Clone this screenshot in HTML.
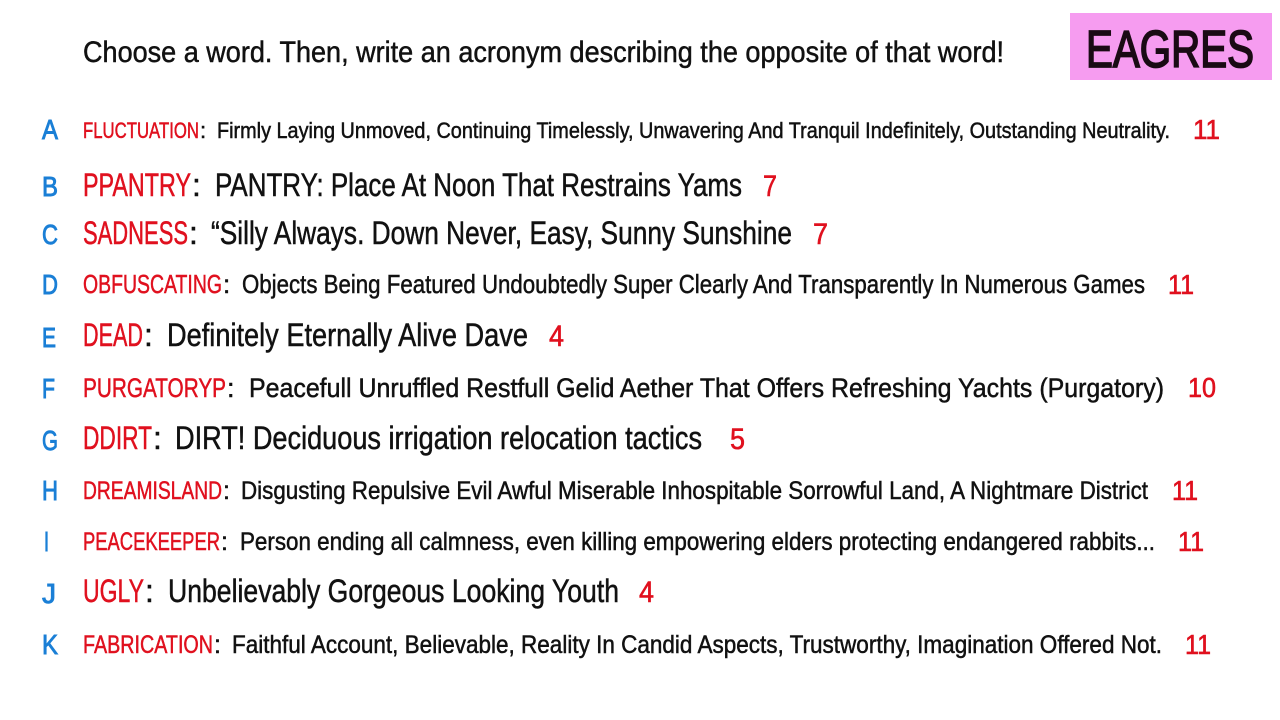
<!DOCTYPE html>
<html><head><meta charset="utf-8"><style>
html,body{margin:0;padding:0;background:#fff;width:1280px;height:720px;overflow:hidden}
svg text{font-family:"Liberation Sans Narrow","Liberation Sans",sans-serif}
.l{fill:#1a7fd6;stroke:#1a7fd6;stroke-width:0.9}
.w{fill:#e0101e;stroke:#e0101e;stroke-width:0.5}
.d{fill:#111;stroke:#111;stroke-width:0.5}
.n{fill:#e0101e;stroke:#e0101e;stroke-width:0.6}
</style></head><body>
<svg width="1280" height="720" xmlns="http://www.w3.org/2000/svg">
<rect x="1070" y="13" width="202" height="67" fill="#f69cf0"/>
<text x="1086" y="67" font-size="52" fill="#1a0a14" stroke="#1a0a14" stroke-width="1.8" textLength="168" lengthAdjust="spacingAndGlyphs">EAGRES</text>
<text class="d" x="83" y="62" font-size="30" textLength="921" lengthAdjust="spacingAndGlyphs">Choose a word. Then, write an acronym describing the opposite of that word!</text>

<g font-size="28">
<text class="l" x="42" y="139" textLength="16" lengthAdjust="spacingAndGlyphs">A</text>
<text class="l" x="42" y="196" textLength="16" lengthAdjust="spacingAndGlyphs">B</text>
<text class="l" x="42" y="244" textLength="16" lengthAdjust="spacingAndGlyphs">C</text>
<text class="l" x="42" y="294" textLength="16" lengthAdjust="spacingAndGlyphs">D</text>
<text class="l" x="42" y="347" textLength="14" lengthAdjust="spacingAndGlyphs">E</text>
<text class="l" x="42" y="398" textLength="13" lengthAdjust="spacingAndGlyphs">F</text>
<text class="l" x="42" y="450" textLength="16" lengthAdjust="spacingAndGlyphs">G</text>
<text class="l" x="42" y="500" textLength="16" lengthAdjust="spacingAndGlyphs">H</text>
<text class="l" x="44" y="551" textLength="5" lengthAdjust="spacingAndGlyphs">I</text>
<text class="l" x="42" y="603" textLength="14" lengthAdjust="spacingAndGlyphs">J</text>
<text class="l" x="42" y="654" textLength="16" lengthAdjust="spacingAndGlyphs">K</text>
</g>

<text class="w" x="83" y="138" font-size="22" textLength="116" lengthAdjust="spacingAndGlyphs">FLUCTUATION</text>
<text class="d" x="200" y="138" font-size="22">:</text>
<text class="d" x="217" y="138" font-size="22" textLength="953" lengthAdjust="spacingAndGlyphs">Firmly Laying Unmoved, Continuing Timelessly, Unwavering And Tranquil Indefinitely, Outstanding Neutrality.</text>
<text class="n" x="1193" y="139" font-size="28" textLength="27" lengthAdjust="spacingAndGlyphs">11</text>

<text class="w" x="83" y="196" font-size="32" textLength="108" lengthAdjust="spacingAndGlyphs">PPANTRY</text>
<text class="d" x="192" y="196" font-size="32">:</text>
<text class="d" x="215" y="196" font-size="32" textLength="527" lengthAdjust="spacingAndGlyphs">PANTRY: Place At Noon That Restrains Yams</text>
<text class="n" x="763" y="196" font-size="30" textLength="14" lengthAdjust="spacingAndGlyphs">7</text>

<text class="w" x="83" y="244" font-size="32" textLength="105" lengthAdjust="spacingAndGlyphs">SADNESS</text>
<text class="d" x="189" y="244" font-size="32">:</text>
<text class="d" x="211" y="244" font-size="32" textLength="581" lengthAdjust="spacingAndGlyphs">“Silly Always. Down Never, Easy, Sunny Sunshine</text>
<text class="n" x="813" y="244" font-size="30" textLength="15" lengthAdjust="spacingAndGlyphs">7</text>

<text class="w" x="83" y="293" font-size="26" textLength="139" lengthAdjust="spacingAndGlyphs">OBFUSCATING</text>
<text class="d" x="223" y="293" font-size="26">:</text>
<text class="d" x="242" y="293" font-size="26" textLength="903" lengthAdjust="spacingAndGlyphs">Objects Being Featured Undoubtedly Super Clearly And Transparently In Numerous Games</text>
<text class="n" x="1168" y="294" font-size="28" textLength="26" lengthAdjust="spacingAndGlyphs">11</text>

<text class="w" x="83" y="346" font-size="32" textLength="60" lengthAdjust="spacingAndGlyphs">DEAD</text>
<text class="d" x="144" y="346" font-size="32">:</text>
<text class="d" x="167" y="346" font-size="32" textLength="361" lengthAdjust="spacingAndGlyphs">Definitely Eternally Alive Dave</text>
<text class="n" x="549" y="346" font-size="30" textLength="15" lengthAdjust="spacingAndGlyphs">4</text>

<text class="w" x="83" y="397" font-size="27" textLength="143" lengthAdjust="spacingAndGlyphs">PURGATORYP</text>
<text class="d" x="227" y="397" font-size="27">:</text>
<text class="d" x="249" y="397" font-size="27" textLength="915" lengthAdjust="spacingAndGlyphs">Peacefull Unruffled Restfull Gelid Aether That Offers Refreshing Yachts (Purgatory)</text>
<text class="n" x="1188" y="397" font-size="28" textLength="28" lengthAdjust="spacingAndGlyphs">10</text>

<text class="w" x="83" y="449" font-size="32" textLength="69" lengthAdjust="spacingAndGlyphs">DDIRT</text>
<text class="d" x="153" y="449" font-size="32">:</text>
<text class="d" x="175" y="449" font-size="32" textLength="527" lengthAdjust="spacingAndGlyphs">DIRT! Deciduous irrigation relocation tactics</text>
<text class="n" x="730" y="449" font-size="30" textLength="15" lengthAdjust="spacingAndGlyphs">5</text>

<text class="w" x="83" y="499" font-size="25" textLength="139" lengthAdjust="spacingAndGlyphs">DREAMISLAND</text>
<text class="d" x="223" y="499" font-size="25">:</text>
<text class="d" x="241" y="499" font-size="25" textLength="907" lengthAdjust="spacingAndGlyphs">Disgusting Repulsive Evil Awful Miserable Inhospitable Sorrowful Land, A Nightmare District</text>
<text class="n" x="1172" y="500" font-size="28" textLength="26" lengthAdjust="spacingAndGlyphs">11</text>

<text class="w" x="83" y="550" font-size="25" textLength="137" lengthAdjust="spacingAndGlyphs">PEACEKEEPER</text>
<text class="d" x="221" y="550" font-size="25">:</text>
<text class="d" x="240" y="550" font-size="25" textLength="915" lengthAdjust="spacingAndGlyphs">Person ending all calmness, even killing empowering elders protecting endangered rabbits...</text>
<text class="n" x="1178" y="551" font-size="28" textLength="26" lengthAdjust="spacingAndGlyphs">11</text>

<text class="w" x="83" y="602" font-size="32" textLength="61" lengthAdjust="spacingAndGlyphs">UGLY</text>
<text class="d" x="145" y="602" font-size="32">:</text>
<text class="d" x="168" y="602" font-size="32" textLength="451" lengthAdjust="spacingAndGlyphs">Unbelievably Gorgeous Looking Youth</text>
<text class="n" x="639" y="602" font-size="30" textLength="15" lengthAdjust="spacingAndGlyphs">4</text>

<text class="w" x="83" y="653" font-size="25" textLength="130" lengthAdjust="spacingAndGlyphs">FABRICATION</text>
<text class="d" x="214" y="653" font-size="25">:</text>
<text class="d" x="232" y="653" font-size="25" textLength="930" lengthAdjust="spacingAndGlyphs">Faithful Account, Believable, Reality In Candid Aspects, Trustworthy, Imagination Offered Not.</text>
<text class="n" x="1185" y="654" font-size="28" textLength="26" lengthAdjust="spacingAndGlyphs">11</text>
</svg>
</body></html>
